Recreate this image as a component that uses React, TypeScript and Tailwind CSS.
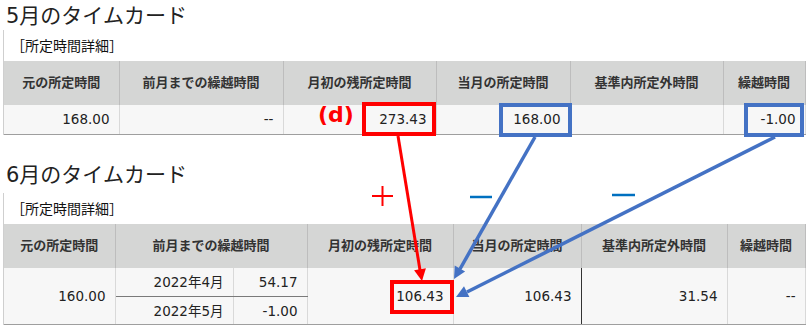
import React from "react";

const FONT = "font-['DejaVu_Sans','Noto_Sans_CJK_JP',sans-serif]";

const TOP_HEAD = ["元の所定時間", "前月までの繰越時間", "月初の残所定時間", "当月の所定時間", "基準内所定外時間", "繰越時間"];
const TOP_COLS = [115, 164, 153, 134, 153, 82];
const TOP_ROW = ["168.00", "--", "273.43", "168.00", "", "-1.00"];

const BOTTOM_COLS = [111, 118, 74, 146, 128, 146, 78];

const th = "h-[44px] p-0 bg-[#d5d6d5] border-r border-[#bdbdbd] text-center align-middle font-bold text-[13px] text-[#333] leading-[20px]";
const td = "p-0 pr-[9px] bg-[#f7f7f7] text-right align-middle text-[13.5px] text-[#222] leading-[20px]";

function Section({ title, children, first }: { title: string; children: React.ReactNode; first?: boolean }) {
  return (
    <div>
      <div className={`${first ? "pt-[2px]" : "mt-[26px]"} pl-[6px] text-[21px] leading-[28px] text-[#222]`}>
        {title}
      </div>
      <div className={`${first ? "" : "mt-[4px]"} ml-[3px] border-l border-[#cfcfcf] pt-[6px]`}>
        <div className="pl-[7px] h-[20px] text-[14px] leading-[20px] text-[#111] mb-[5px]">［所定時間詳細］</div>
        {children}
      </div>
    </div>
  );
}

export default function App() {
  return (
    <div className={`relative w-[808px] h-[326px] overflow-hidden bg-white ${FONT}`}>
      {/* 5月 */}
      <Section title="5月のタイムカード" first>
        <table className="table-fixed border-collapse w-[801px]">
          <colgroup>
            {TOP_COLS.map((w, i) => (
              <col key={i} style={{ width: w }} />
            ))}
          </colgroup>
          <thead>
            <tr>
              {TOP_HEAD.map((h) => (
                <th key={h} className={th}>{h}</th>
              ))}
            </tr>
          </thead>
          <tbody>
            <tr className="h-[29px]">
              {TOP_ROW.map((v, i) => (
                <td key={i} className={`${td} border-r border-b border-r-[#d9d9d9] border-b-[#9e9e9e]`}>{v}</td>
              ))}
            </tr>
          </tbody>
        </table>
      </Section>

      {/* 6月 */}
      <Section title="6月のタイムカード">
        <table className="table-fixed border-collapse w-[801px]">
          <colgroup>
            {BOTTOM_COLS.map((w, i) => (
              <col key={i} style={{ width: w }} />
            ))}
          </colgroup>
          <thead>
            <tr>
              <th className={th}>元の所定時間</th>
              <th className={th} colSpan={2}>前月までの繰越時間</th>
              <th className={th}>月初の残所定時間</th>
              <th className={th}>当月の所定時間</th>
              <th className={th}>基準内所定外時間</th>
              <th className={th}>繰越時間</th>
            </tr>
          </thead>
          <tbody>
            <tr className="h-[29px]">
              <td rowSpan={2} className={`${td} border-r border-b border-r-[#d9d9d9] border-b-[#9e9e9e]`}>160.00</td>
              <td className={`${td} border-r border-b border-r-[#d9d9d9] border-b-[#7a7a7a]`}>2022年4月</td>
              <td className={`${td} border-r border-b border-r-[#d9d9d9] border-b-[#7a7a7a]`}>54.17</td>
              <td rowSpan={2} className={`${td} border-r border-b border-r-[#d9d9d9] border-b-[#9e9e9e]`}>106.43</td>
              <td rowSpan={2} className={`${td} border-r border-b border-r-[#333] border-b-[#9e9e9e]`}>106.43</td>
              <td rowSpan={2} className={`${td} border-r border-b border-r-[#d9d9d9] border-b-[#9e9e9e]`}>31.54</td>
              <td rowSpan={2} className={`${td} border-r border-b border-r-[#d9d9d9] border-b-[#9e9e9e]`}>--</td>
            </tr>
            <tr className="h-[28px]">
              <td className={`${td} border-r border-b border-r-[#d9d9d9] border-b-[#9e9e9e]`}>2022年5月</td>
              <td className={`${td} border-r border-b border-r-[#d9d9d9] border-b-[#9e9e9e]`}>-1.00</td>
            </tr>
          </tbody>
        </table>
      </Section>

      {/* 注釈 */}
      <span className="absolute left-[318px] top-[100px] text-[22px] leading-[30px] font-bold text-[#ff0000] font-['DejaVu_Sans',sans-serif]">
        (d)
      </span>
      <svg className="absolute inset-0 pointer-events-none" width="808" height="326" viewBox="0 0 808 326">
        <g fill="none" strokeWidth="4">
          <rect x="364" y="104" width="70" height="30" stroke="#ff0000" />
          <rect x="501" y="105" width="69" height="30" stroke="#4472c4" />
          <rect x="746" y="105" width="56" height="30" stroke="#4472c4" />
          <rect x="392" y="282" width="60" height="30" stroke="#ff0000" />
        </g>
        <line x1="398" y1="136" x2="420" y2="270" stroke="#ff0000" strokeWidth="3" />
        <polygon points="422,281 414.1,270.2 425.9,268.2" fill="#ff0000" />
        <line x1="535" y1="137" x2="460" y2="269" stroke="#4472c4" strokeWidth="3.5" />
        <polygon points="454,279 454.7,265.6 465.1,271.6" fill="#4472c4" />
        <line x1="775" y1="137" x2="467" y2="292" stroke="#4472c4" strokeWidth="3.5" />
        <polygon points="456,297 464,286.3 469.4,297" fill="#4472c4" />
        <line x1="372" y1="196" x2="393" y2="196" stroke="#ff0000" strokeWidth="2" />
        <line x1="382.5" y1="186" x2="382.5" y2="206" stroke="#ff0000" strokeWidth="2" />
        <line x1="470" y1="197" x2="492" y2="197" stroke="#0070c0" strokeWidth="2.5" />
        <line x1="612" y1="195" x2="635" y2="195" stroke="#0070c0" strokeWidth="2.5" />
      </svg>
    </div>
  );
}
